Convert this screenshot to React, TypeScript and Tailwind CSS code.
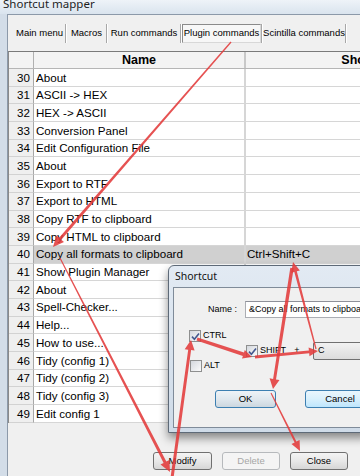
import React from "react";

const rows: [number, string, string?][] = [
  [30, "About"],
  [31, "ASCII -> HEX"],
  [32, "HEX -> ASCII"],
  [33, "Conversion Panel"],
  [34, "Edit Configuration File"],
  [35, "About"],
  [36, "Export to RTF"],
  [37, "Export to HTML"],
  [38, "Copy RTF to clipboard"],
  [39, "Copy HTML to clipboard"],
  [40, "Copy all formats to clipboard", "Ctrl+Shift+C"],
  [41, "Show Plugin Manager"],
  [42, "About"],
  [43, "Spell-Checker..."],
  [44, "Help..."],
  [45, "How to use..."],
  [46, "Tidy (config 1)"],
  [47, "Tidy (config 2)"],
  [48, "Tidy (config 3)"],
  [49, "Edit config 1"],
];

function Check({ checked }: { checked: boolean }) {
  return (
    <div className="w-[12px] h-[12px] shrink-0 border border-[#8e8f8f] bg-linear-to-br from-[#d4d8de] to-[#fbfbfb] flex items-center justify-center">
      {checked && (
        <svg width="9" height="9" viewBox="0 0 9 9">
          <path d="M1 4.6 L3.4 7.2 L8 1.4" fill="none" stroke="#44598f" strokeWidth="1.6" />
        </svg>
      )}
    </div>
  );
}

function Sep() {
  return <div className="w-[2px] h-[19px] shrink-0 border-l border-[#a7a7a7] border-r border-r-white" />;
}

type Arr = { a: [number, number]; b: [number, number]; w1: number; w2: number; h: number; hw: number };

const arrows: Arr[] = [
  { a: [231, 42], b: [53, 247], w1: 1.2, w2: 3, h: 11, hw: 10 },
  { a: [60, 258], b: [170, 472], w1: 1.2, w2: 3, h: 11, hw: 10 },
  { a: [172, 478], b: [191, 340], w1: 3, w2: 3, h: 10, hw: 10 },
  { a: [197, 339], b: [252, 357], w1: 3, w2: 3.5, h: 9, hw: 9 },
  { a: [255, 357], b: [318, 351], w1: 3, w2: 3, h: 9, hw: 9 },
  { a: [316, 349], b: [293, 262], w1: 1.2, w2: 2.5, h: 10, hw: 9 },
  { a: [292, 268], b: [273, 389], w1: 3.5, w2: 3, h: 10, hw: 10 },
  { a: [271, 393], b: [300, 451], w1: 1.2, w2: 2, h: 10, hw: 9 },
];

function arrowPoints(r: Arr) {
  const [x1, y1] = r.a;
  const [x2, y2] = r.b;
  const dx = x2 - x1;
  const dy = y2 - y1;
  const L = Math.hypot(dx, dy);
  const ux = dx / L;
  const uy = dy / L;
  const nx = -uy;
  const ny = ux;
  const bx = x2 - ux * r.h;
  const by = y2 - uy * r.h;
  const pts = [
    [x1 + (nx * r.w1) / 2, y1 + (ny * r.w1) / 2],
    [bx + (nx * r.w2) / 2, by + (ny * r.w2) / 2],
    [bx + (nx * r.hw) / 2, by + (ny * r.hw) / 2],
    [x2, y2],
    [bx - (nx * r.hw) / 2, by - (ny * r.hw) / 2],
    [bx - (nx * r.w2) / 2, by - (ny * r.w2) / 2],
    [x1 - (nx * r.w1) / 2, y1 - (ny * r.w1) / 2],
  ];
  return pts.map((p) => p[0].toFixed(1) + "," + p[1].toFixed(1)).join(" ");
}

const btn =
  "h-[18px] shrink-0 rounded-[3px] border border-[#707070] bg-linear-to-b from-[#f4f4f4] via-[#e8e8e8] to-[#d6d6d6] flex items-center justify-center text-[9.5px] text-black";

export default function App() {
  return (
    <div className="relative w-[360px] h-[476px] overflow-hidden bg-[#d6e0ea] font-['Liberation_Sans',Arial,sans-serif] text-black">
      {/* window title bar */}
      <div className="h-[14px] flex items-start pl-[3px] bg-linear-to-b from-[#eef3f8] to-[#dae4ee]">
        <span className="font-['Noto_Sans',sans-serif] text-[11.5px] leading-none mt-[-2px] text-[#1e1e1e]">Shortcut mapper</span>
      </div>
      <div className="flex h-[462px]">
        <div className="w-[8px] shrink-0 bg-[#d3dde8] border-r border-[#8c99a9]" />
        <div className="flex-1 flex flex-col bg-[#f0f0f0] border-t border-[#8c99a9] min-w-0">
          {/* tabs */}
          <div className="flex items-center pl-[6px] pt-[8px] h-[28px] text-[9.5px]">
            <div className="w-[51px] h-[19px] flex items-center justify-center">Main menu</div>
            <Sep />
            <div className="w-[39px] h-[19px] flex items-center justify-center">Macros</div>
            <Sep />
            <div className="w-[72px] h-[19px] flex items-center justify-center">Run commands</div>
            <Sep />
            <div className="w-[79px] h-[19px] flex items-center justify-center border border-t-[#8a8a8a] border-l-[#8a8a8a] border-r-[#d8d8d8] border-b-[#d8d8d8] bg-[#f7f7f7]">
              Plugin commands
            </div>
            <Sep />
            <div className="w-[82px] h-[19px] flex items-center justify-center">Scintilla commands</div>
            <Sep />
          </div>
          {/* grid */}
          <div className="mt-[8px] w-[480px] border-t border-t-[#7a7a7a] border-l border-l-[#8a8a8a] bg-white">
            <div className="flex h-[17px] bg-[#f3f3f3] border-b border-[#b5b5b5] font-bold text-[12.5px]">
              <div className="w-[25px] shrink-0 border-r border-[#b0b0b0]" />
              <div className="w-[212px] shrink-0 border-r-2 border-r-[#c8c8c8] flex items-center justify-center">Name</div>
              <div className="flex-1 flex items-center justify-center">Shortcut</div>
            </div>
            {rows.map(([n, name, sc]) => {
              const sel = n === 40;
              return (
                <div key={n} className="flex h-[17.7px] text-[11.6px] leading-none">
                  <div className="w-[25px] shrink-0 bg-[#efefef] border-r border-r-[#a8a8a8] border-b border-b-[#d2d2d2] flex items-center justify-end pr-[3px]">
                    {n}
                  </div>
                  <div
                    className={
                      "w-[212px] shrink-0 border-r-2 border-r-[#d6d6d6] border-b border-b-[#d6d6d6] flex items-center pl-[2px] whitespace-nowrap " +
                      (sel ? "bg-[#d0d0d0]" : "bg-white")
                    }
                  >
                    {name}
                  </div>
                  <div
                    className={
                      "flex-1 border-b border-b-[#d6d6d6] flex items-center pl-[1px] " +
                      (sel ? "bg-[#d0d0d0]" : "bg-white")
                    }
                  >
                    {sc ?? ""}
                  </div>
                </div>
              );
            })}
          </div>
          {/* bottom buttons */}
          <div className="flex pl-[145px] mt-[29px] gap-[10px]">
            <div className={btn + " w-[59px]"}>Modify</div>
            <div className="h-[18px] w-[58px] shrink-0 rounded-[3px] border border-[#b6b9bc] bg-[#f4f4f4] flex items-center justify-center text-[9.5px] text-[#a6a6a6]">
              Delete
            </div>
            <div className={btn + " w-[58px]"}>Close</div>
          </div>
        </div>
      </div>

      {/* Shortcut dialog */}
      <div className="absolute left-[168px] top-[265px] w-[200px] h-[168px] rounded-t-[6px] border border-[#5e6a78] bg-linear-to-b from-[#e2eaf3] to-[#cfdbe8] shadow-[0_5px_10px_rgba(0,0,0,0.45)] flex flex-col">
        <div className="h-[21px] flex items-center pl-[6px] font-['Noto_Sans',sans-serif] text-[10.5px] text-[#111]">Shortcut</div>
        <div className="ml-[4px] mb-[4px] flex-1 border border-[#7f8b99] bg-[#f0f0f0] flex flex-col text-[9px]">
          <div className="flex items-center mt-[13px] h-[17px]">
            <div className="w-[63px] shrink-0 text-right">Name :</div>
            <div className="ml-[8px] flex-1 h-[17px] border border-[#abadb3] border-t-[#8e9099] bg-white flex items-center pl-[3px] whitespace-nowrap overflow-hidden">
              &amp;Copy all formats to clipboard
            </div>
          </div>
          <div className="flex items-center mt-[12px] h-[12px] pl-[15px] gap-[2px]">
            <Check checked />
            <span>CTRL</span>
          </div>
          <div className="flex items-center h-[18px] pl-[72px]">
            <Check checked />
            <span className="ml-[2px] w-[32px]">SHIFT</span>
            <span className="w-[10px] text-center">+</span>
            <div className="ml-[11px] flex-1 h-[18px] rounded-[2px] border border-[#707070] bg-linear-to-b from-[#f2f2f2] to-[#dcdcdc] flex items-center pl-[4px]">
              C
            </div>
          </div>
          <div className="flex items-center h-[12px] pl-[16px] gap-[2px]">
            <Check checked={false} />
            <span>ALT</span>
          </div>
          <div className="flex items-center mt-[18px] pl-[41px] gap-[29px]">
            <div className="h-[18px] w-[61px] shrink-0 rounded-[3px] border border-[#3c7fb1] bg-linear-to-b from-[#eef3f7] via-[#e0e8ee] to-[#ccd7df] flex items-center justify-center text-[9.5px]">
              OK
            </div>
            <div className="h-[18px] w-[70px] shrink-0 rounded-[3px] border border-[#3c7fb1] bg-linear-to-b from-[#eaf6fd] via-[#d9f0fc] to-[#bee6fd] flex items-center justify-center text-[9.5px]">
              Cancel
            </div>
          </div>
        </div>
      </div>

      {/* red annotation arrows */}
      <svg className="absolute inset-0 pointer-events-none" width="360" height="476" viewBox="0 0 360 476">
        {arrows.map((r, i) => (
          <polygon key={i} points={arrowPoints(r)} fill="#e33a3a" fillOpacity="0.88" />
        ))}
      </svg>
    </div>
  );
}
